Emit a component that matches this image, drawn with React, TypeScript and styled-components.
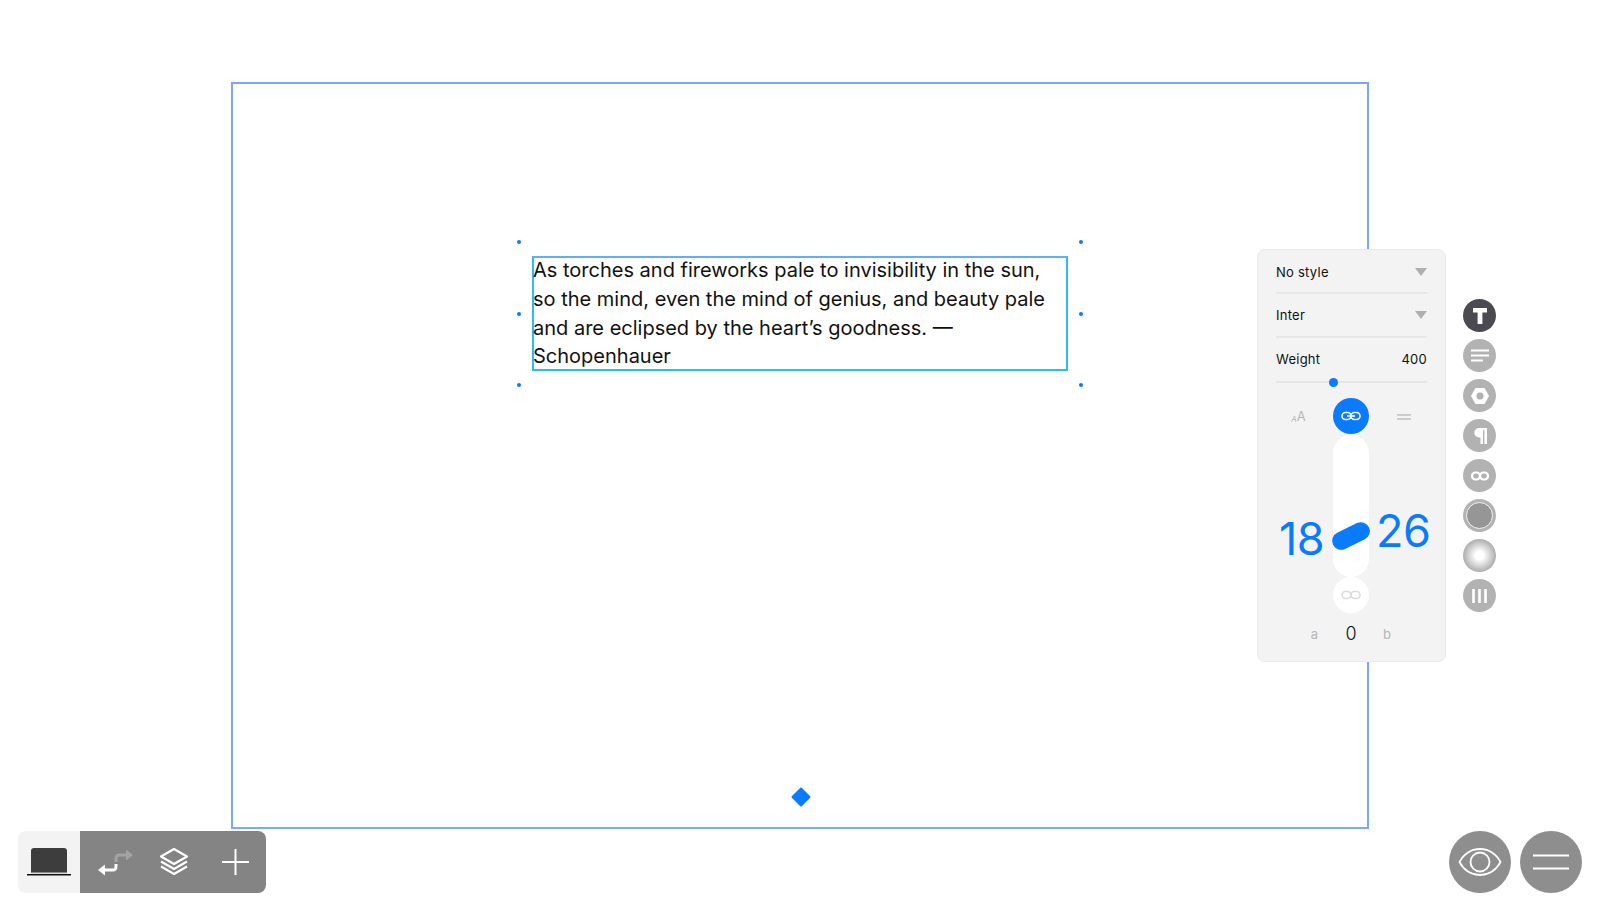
import React from "react";
import styled, { createGlobalStyle } from "styled-components";

const Global = createGlobalStyle`
  html, body { margin: 0; padding: 0; background: #fff; overflow: hidden; }
  * { box-sizing: border-box; }
  body { font-family: Inter, "Liberation Sans", sans-serif; }
`;

const Page = styled.div`
  width: 1600px;
  height: 911px;
  display: flex;
  flex-direction: column;
  padding-top: 82px;
`;
const Stage = styled.div`
  padding: 0 231px;
`;
const Frame = styled.section`
  position: relative;
  width: 1138px;
  height: 747px;
  border: 2px solid #7ba8fb;
`;
const Selection = styled.div`
  position: absolute;
  left: 284px;
  top: 156px;
  width: 566px;
  height: 147px;
`;
const Handle = styled.i<{ $x: "l" | "r"; $y: "t" | "m" | "b" }>`
  position: absolute;
  width: 4px;
  height: 4px;
  border-radius: 50%;
  background: #0a7bff;
  ${(p) => (p.$x === "l" ? "left: 0;" : "right: 0;")}
  ${(p) => (p.$y === "t" ? "top: 0;" : p.$y === "b" ? "bottom: 0;" : "top: 72px;")}
`;
const TextBox = styled.div`
  position: absolute;
  left: 15px;
  top: 16px;
  width: 536px;
  height: 115px;
  border: 2px solid #2bbcf0;
  border-top-color: #5fb0f8;
  font-size: 20px;
  line-height: 28.8px;
  color: #111;
`;
const TextBody = styled.p`
  margin: -2px 0 0 -1px;
`;
const Diamond = styled.i`
  position: absolute;
  left: 561px;
  top: 706px;
  width: 14px;
  height: 14px;
  background: #0a7bff;
  transform: rotate(45deg);
  border-radius: 1px;
`;
const Inspector = styled.div`
  position: absolute;
  left: 1024px;
  top: 165px;
  display: flex;
  gap: 17px;
  align-items: flex-start;
`;
const Panel = styled.aside`
  width: 189px;
  height: 413px;
  background: #f3f3f3;
  border: 1px solid #ebebeb;
  border-radius: 8px;
  padding: 0 18px;
  display: flex;
  flex-direction: column;
  color: #111;
  font-size: 13px;
  letter-spacing: 0.25px;
`;
const SelectRow = styled.div<{ $h: number; $pt?: number }>`
  height: ${(p) => p.$h}px;
  padding-top: ${(p) => p.$pt ?? 0}px;
  flex: none;
  display: flex;
  align-items: center;
  justify-content: space-between;
  border-bottom: 2px solid #e8e8e8;
`;
const Caret = styled.i`
  width: 0;
  height: 0;
  border-left: 6px solid transparent;
  border-right: 6px solid transparent;
  border-top: 8px solid #b0b0b0;
`;
const WeightRow = styled.div`
  display: flex;
  justify-content: space-between;
  align-items: center;
  height: 42px;
  flex: none;
`;
const Slider = styled.div`
  position: relative;
  height: 2px;
  flex: none;
  background: #e6e6e6;
  margin-top: 1px;
`;
const SliderThumb = styled.i`
  position: absolute;
  left: 53px;
  top: -3.5px;
  width: 9px;
  height: 9px;
  border-radius: 50%;
  background: #0a7bff;
`;
const Dial = styled.div`
  margin-top: 15px;
  display: grid;
  grid-template-columns: 57px 36px 1fr;
  grid-template-rows: 37px 142px 36px 1fr;
  flex: 1;
  letter-spacing: 0;
`;
const ModeCell = styled.div<{ $pr?: number; $pl?: number }>`
  display: flex;
  align-items: center;
  justify-content: center;
  color: #b6b6b6;
  padding-right: ${(p) => p.$pr ?? 0}px;
  padding-left: ${(p) => p.$pl ?? 0}px;
`;
const SmallA = styled.span`
  font-size: 8px;
  font-style: italic;
  line-height: 1;
  align-self: flex-end;
  margin-bottom: 12px;
`;
const BigA = styled.span`
  font-size: 13px;
  line-height: 1;
  align-self: flex-end;
  margin-bottom: 12px;
`;
const RoundBtn = styled.div<{ $on?: boolean }>`
  width: 36px;
  height: 36px;
  border-radius: 50%;
  background: ${(p) => (p.$on ? "#0a7bff" : "#fff")};
  display: flex;
  align-items: center;
  justify-content: center;
`;
const Track = styled.div`
  position: relative;
  background: #fff;
  border-radius: 18px;
`;
const TrackThumb = styled.i`
  position: absolute;
  left: -2px;
  top: 92px;
  width: 40px;
  height: 18px;
  border-radius: 9px;
  background: #0a7bff;
  transform: rotate(-26deg);
`;
const Value = styled.div<{ $mt: number; $ml: number }>`
  font-size: 45px;
  line-height: 54px;
  font-weight: 400;
  color: #0a7bff;
  letter-spacing: -0.5px;
  margin-top: ${(p) => p.$mt}px;
  margin-left: ${(p) => p.$ml}px;
  white-space: nowrap;
`;
const Tick = styled.div<{ $dark?: boolean }>`
  display: flex;
  align-items: flex-start;
  justify-content: center;
  padding-top: ${(p) => (p.$dark ? 12 : 15)}px;
  font-size: ${(p) => (p.$dark ? 18 : 13)}px;
  line-height: 1;
  font-weight: ${(p) => (p.$dark ? 300 : 400)};
  color: ${(p) => (p.$dark ? "#111" : "#b6b6b6")};
`;
const TickA = styled(Tick)`
  justify-content: flex-end;
  padding-right: 15px;
`;
const TickB = styled(Tick)`
  justify-content: flex-start;
  padding-left: 14px;
`;
const Rail = styled.nav`
  display: flex;
  flex-direction: column;
  gap: 7px;
  margin-top: 50px;
`;
const RailBtn = styled.div<{ $v?: "dark" | "ring" | "glow" }>`
  width: 33px;
  height: 33px;
  border-radius: 50%;
  display: flex;
  align-items: center;
  justify-content: center;
  background: ${(p) =>
    p.$v === "dark"
      ? "#4a4a50"
      : p.$v === "glow"
      ? "radial-gradient(circle closest-side, #fff 0%, #fff 25%, #adadad 100%)"
      : "#b2b2b2"};
`;
const RingFill = styled.i`
  width: 27px;
  height: 27px;
  border-radius: 50%;
  background: #969696;
  border: 1.5px solid #f2f2f2;
`;
const Footer = styled.footer`
  margin-top: 2px;
  padding: 0 18px;
  display: flex;
  justify-content: space-between;
`;
const Toolbar = styled.div`
  display: flex;
  height: 62px;
  border-radius: 8px;
  overflow: hidden;
`;
const ToolCell = styled.div<{ $light?: boolean }>`
  width: 62px;
  height: 62px;
  background: ${(p) => (p.$light ? "#f3f3f3" : "#848484")};
`;
const RightGroup = styled.div`
  display: flex;
  gap: 9px;
`;
const BigRound = styled.div`
  width: 62px;
  height: 62px;
  border-radius: 50%;
  background: #8e8e8e;
`;
const Icon = styled.svg`
  display: block;
`;

const LinkGlyph = ({ color, arrow }: { color: string; arrow?: boolean }) => (
  <Icon width="20" height="10" viewBox="0 0 20 10" fill="none" stroke={color} strokeWidth="1.6">
    <rect x="1" y="1.5" width="9" height="7" rx="3.5" />
    <rect x="10" y="1.5" width="9" height="7" rx="3.5" />
    {arrow && <path d="M6 5h8" />}
  </Icon>
);

export default function App() {
  return (
    <Page>
      <Global />
      <Stage>
        <Frame>
          <Selection>
            <Handle $x="l" $y="t" />
            <Handle $x="r" $y="t" />
            <Handle $x="l" $y="m" />
            <Handle $x="r" $y="m" />
            <Handle $x="l" $y="b" />
            <Handle $x="r" $y="b" />
            <TextBox>
              <TextBody>
                As torches and fireworks pale to invisibility in the sun, so the mind, even the mind of genius, and beauty pale and are eclipsed by the heart’s goodness. — Schopenhauer
              </TextBody>
            </TextBox>
          </Selection>
          <Diamond />
          <Inspector>
            <Panel>
              <SelectRow $h={44} $pt={2}>
                No style
                <Caret />
              </SelectRow>
              <SelectRow $h={44}>
                Inter
                <Caret />
              </SelectRow>
              <WeightRow>
                <span>Weight</span>
                <span>400</span>
              </WeightRow>
              <Slider>
                <SliderThumb />
              </Slider>
              <Dial>
                <ModeCell $pr={12}>
                  <SmallA>A</SmallA>
                  <BigA>A</BigA>
                </ModeCell>
                <RoundBtn $on>
                  <LinkGlyph color="#fff" arrow />
                </RoundBtn>
                <ModeCell $pl={8}>
                  <Icon width="14" height="6" viewBox="0 0 14 6" stroke="#c0c0c0" strokeWidth="1.3">
                    <path d="M0 1h14M0 5h14" />
                  </Icon>
                </ModeCell>
                <Value $mt={77} $ml={3}>18</Value>
                <Track>
                  <TrackThumb />
                </Track>
                <Value $mt={69} $ml={7}>26</Value>
                <span />
                <RoundBtn>
                  <LinkGlyph color="#dcdcdc" />
                </RoundBtn>
                <span />
                <TickA>a</TickA>
                <Tick $dark>0</Tick>
                <TickB>b</TickB>
              </Dial>
            </Panel>
            <Rail>
              <RailBtn $v="dark">
                <Icon width="14" height="16" viewBox="0 0 14 16" fill="#fff">
                  <path d="M0 0h14v4.5H9.4V16H4.6V4.5H0z" />
                </Icon>
              </RailBtn>
              <RailBtn>
                <Icon width="18" height="13" viewBox="0 0 18 13" stroke="#fff" strokeWidth="2.2">
                  <path d="M0 1.500h18M0 6.500h18M0 11.500h12" />
                </Icon>
              </RailBtn>
              <RailBtn>
                <Icon width="18" height="16" viewBox="0 0 18 16">
                  <path fill="#fff" d="M4.5 0h9L18 8l-4.500 8h-9L0 8z" />
                  <circle cx="9" cy="8" r="3.500" fill="#b2b2b2" />
                </Icon>
              </RailBtn>
              <RailBtn>
                <Icon width="14" height="16" viewBox="0 0 14 16" fill="#fff">
                  <path d="M6 0h8v16h-2.600V2.300H10V16H7.500V9.500H6A4.750 4.750 0 0 1 6 0z" />
                </Icon>
              </RailBtn>
              <RailBtn>
                <Icon width="18" height="10" viewBox="0 0 18 10" fill="none" stroke="#fff" strokeWidth="2.200">
                  <rect x="1" y="1.500" width="8" height="7" rx="3.500" />
                  <rect x="9" y="1.500" width="8" height="7" rx="3.500" />
                </Icon>
              </RailBtn>
              <RailBtn $v="ring">
                <RingFill />
              </RailBtn>
              <RailBtn $v="glow" />
              <RailBtn>
                <Icon width="15" height="14" viewBox="0 0 15 14" stroke="#fff" strokeWidth="2.600">
                  <path d="M1.500 0v14M7.500 0v14M13.500 0v14" />
                </Icon>
              </RailBtn>
            </Rail>
          </Inspector>
        </Frame>
      </Stage>
      <Footer>
        <Toolbar>
          <ToolCell $light>
            <Icon width="62" height="62" viewBox="0 0 62 62">
              <path fill="#3d3d3d" d="M13 20a3 3 0 0 1 3-3h30a3 3 0 0 1 3 3v21H13z" />
              <path fill="#8a8a8a" d="M13 41h36v1.200H13z" />
              <path fill="#111" d="M9 43h44v1.500H9z" />
            </Icon>
          </ToolCell>
          <ToolCell>
            <Icon width="62" height="62" viewBox="0 0 62 62" fill="none">
              <path stroke="#a3a3a3" strokeWidth="3" d="M36 31v-4a3 3 0 0 1 3-3h8" />
              <path fill="#a3a3a3" d="M53 24l-7-5.500v11z" />
              <path stroke="#fff" strokeWidth="3" d="M36 33v3a3 3 0 0 1-3 3H23" />
              <path fill="#fff" d="M18 39l7-5.500v11z" />
            </Icon>
          </ToolCell>
          <ToolCell>
            <Icon width="62" height="62" viewBox="0 0 62 62" fill="none" stroke="#fff" strokeWidth="2.200" strokeLinejoin="round">
              <path d="M32 18l13 7.500-13 7.500-13-7.500z" />
              <path d="M19 30.500l13 7.500 13-7.500M19 35.500l13 7.500 13-7.500" />
            </Icon>
          </ToolCell>
          <ToolCell>
            <Icon width="62" height="62" viewBox="0 0 62 62" stroke="#fff" strokeWidth="2">
              <path d="M18 31h27M31.500 18v26" />
            </Icon>
          </ToolCell>
        </Toolbar>
        <RightGroup>
          <BigRound>
            <Icon width="62" height="62" viewBox="0 0 62 62" fill="none" stroke="#fff" strokeWidth="1.800">
              <path d="M10.500 31C15 22.500 23 18 31 18s16 4.500 20.500 13C47 39.500 39 44 31 44s-16-4.500-20.500-13z" />
              <circle cx="31" cy="31" r="9.500" />
            </Icon>
          </BigRound>
          <BigRound>
            <Icon width="62" height="62" viewBox="0 0 62 62" stroke="#fff" strokeWidth="2">
              <path d="M13 24.500h36M13 37.500h36" />
            </Icon>
          </BigRound>
        </RightGroup>
      </Footer>
    </Page>
  );
}
